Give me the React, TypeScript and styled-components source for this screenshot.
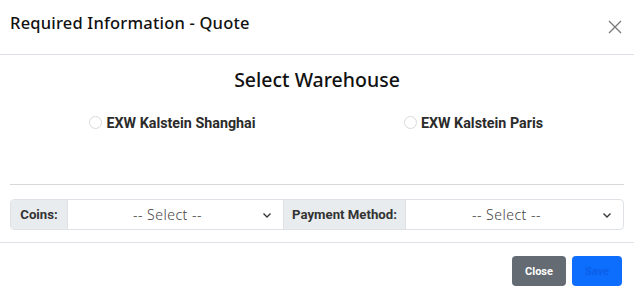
import styled, { createGlobalStyle } from "styled-components";

const GlobalStyle = createGlobalStyle`
  html, body {
    margin: 0;
    padding: 0;
    background: #fff;
  }
  body {
    font-family: "Noto Sans", "Open Sans", sans-serif;
    color: #212529;
  }
`;

const Modal = styled.div`
  width: 634px;
  height: 296px;
  box-sizing: border-box;
  background: #fff;
  display: flex;
  flex-direction: column;
`;

const Header = styled.div`
  height: 55px;
  box-sizing: border-box;
  border-bottom: 1px solid #dee2e6;
  display: flex;
  align-items: center;
  justify-content: space-between;
  padding: 0 10px 0 10px;
`;

const Title = styled.h5`
  margin: 0;
  font-size: 16.5px;
  font-weight: 500;
  letter-spacing: 0.2px;
  color: #111;
  padding-bottom: 10px;
`;

const CloseX = styled.button`
  border: 0;
  background: transparent;
  padding: 0;
  margin-right: 1px;
  width: 16px;
  height: 16px;
  display: flex;
  align-items: center;
  justify-content: center;
  cursor: pointer;
`;

const Body = styled.div`
  padding: 13px 10px 0;
  height: 188px;
  box-sizing: border-box;
  border-bottom: 1px solid #dee2e6;
`;

const Heading = styled.h4`
  margin: 0;
  text-align: center;
  font-size: 19.5px;
  font-weight: 500;
  color: #111;
  line-height: 24px;
`;

const RadioRow = styled.div`
  display: grid;
  grid-template-columns: 1fr 1fr;
  margin-top: 23px;
  height: 70px;
  padding-left: 12px;
  border-bottom: 1px solid #d6d8db;
  margin-bottom: 14px;
  box-sizing: border-box;
`;

const RadioItem = styled.label`
  display: flex;
  align-items: flex-start;
  justify-content: center;
  gap: 4px;
  font-family: Roboto, "Liberation Sans", sans-serif;
  font-weight: 700;
  font-size: 14.3px;
  color: #2b2b2b;
  line-height: 16px;
`;

const RadioDot = styled.span`
  width: 13px;
  height: 13px;
  border-radius: 50%;
  border: 1px solid #d9d9d9;
  margin-top: 1px;
  box-sizing: border-box;
`;

const InputGroup = styled.div`
  display: flex;
  height: 31px;
  border: 1px solid #dee2e6;
  border-radius: 4px;
  box-sizing: border-box;
  overflow: hidden;
`;

const Addon = styled.div<{ $w: number }>`
  width: ${(p) => p.$w}px;
  flex: none;
  background: #e9ecef;
  display: flex;
  align-items: center;
  justify-content: center;
  font-family: Roboto, "Liberation Sans", sans-serif;
  font-weight: 700;
  font-size: 13.2px;
  color: #333;
  border-right: 1px solid #dee2e6;
  box-sizing: border-box;
`;

const SelectBox = styled.div<{ $w: number }>`
  width: ${(p) => p.$w}px;
  flex: none;
  display: flex;
  align-items: center;
  justify-content: center;
  position: relative;
  padding-right: 16px;
  font-size: 14px;
  font-weight: 300;
  letter-spacing: 0.5px;
  color: #444;
  box-sizing: border-box;
  border-right: 1px solid #dee2e6;
  &:last-child {
    border-right: 0;
    flex: 1;
  }
`;

const Chevron = styled.svg`
  position: absolute;
  right: 11px;
  top: 11px;
`;

const Footer = styled.div`
  flex: 1;
  display: flex;
  justify-content: flex-end;
  align-items: flex-start;
  gap: 6px;
  padding: 13px 12px 0;
`;

const Btn = styled.button<{ $variant: "secondary" | "primary" }>`
  height: 30px;
  border: 0;
  border-radius: 4px;
  padding: 0 12px;
  font-family: Roboto, "Liberation Sans", sans-serif;
  font-weight: 700;
  font-size: 11px;
  background: ${(p) => (p.$variant === "primary" ? "#0d6efd" : "#646b72")};
  color: ${(p) => (p.$variant === "primary" ? "#0b5fe8" : "#fff")};
  min-width: ${(p) => (p.$variant === "primary" ? "50px" : "54px")};
`;

const Select = ({ w }: { w: number }) => (
  <SelectBox $w={w}>
    -- Select --
    <Chevron width="10" height="8" viewBox="0 0 10 8">
      <path d="M1.5 2.5 L5 6 L8.5 2.5" fill="none" stroke="#333" strokeWidth="1.3" />
    </Chevron>
  </SelectBox>
);

export default function App() {
  return (
    <>
      <GlobalStyle />
      <Modal>
        <Header>
          <Title>Required Information - Quote</Title>
          <CloseX aria-label="close">
            <svg width="14" height="14" viewBox="0 0 14 14">
              <path d="M1 1 L13 13 M13 1 L1 13" stroke="#777" strokeWidth="1.3" />
            </svg>
          </CloseX>
        </Header>
        <Body>
          <Heading>Select Warehouse</Heading>
          <RadioRow>
            <RadioItem>
              <RadioDot />
              EXW Kalstein Shanghai
            </RadioItem>
            <RadioItem>
              <RadioDot />
              EXW Kalstein Paris
            </RadioItem>
          </RadioRow>
          <InputGroup>
            <Addon $w={57}>Coins:</Addon>
            <Select w={216} />
            <Addon $w={122}>Payment Method:</Addon>
            <Select w={217} />
          </InputGroup>
        </Body>
        <Footer>
          <Btn $variant="secondary">Close</Btn>
          <Btn $variant="primary">Save</Btn>
        </Footer>
      </Modal>
    </>
  );
}
